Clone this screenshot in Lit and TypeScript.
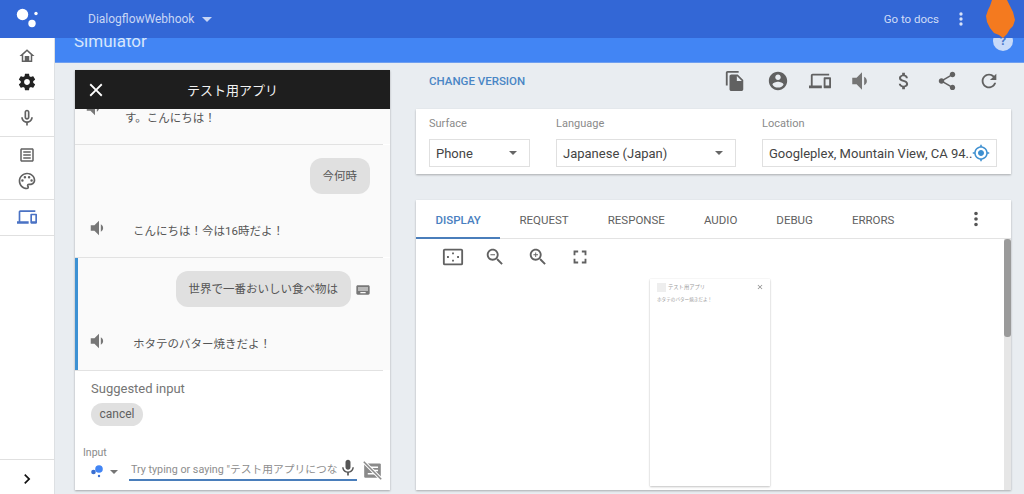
import { LitElement, html, css } from "lit";
import { customElement } from "lit/decorators.js";

const P = {
  home: "M12 3L2 12h3v8h14v-8h3L12 3zm5 15h-2v-6H9v6H7v-7.81l5-4.5 5 4.5V18z",
  gear: "M19.43 12.98c.04-.32.07-.64.07-.98s-.03-.66-.07-.98l2.11-1.65c.19-.15.24-.42.12-.64l-2-3.46c-.12-.22-.39-.3-.61-.22l-2.49 1c-.52-.4-1.08-.73-1.69-.98l-.38-2.65C14.46 2.18 14.25 2 14 2h-4c-.25 0-.46.18-.49.42l-.38 2.65c-.61.25-1.17.59-1.69.98l-2.49-1c-.23-.09-.49 0-.61.22l-2 3.46c-.13.22-.07.49.12.64l2.11 1.65c-.04.32-.07.65-.07.98s.03.66.07.98l-2.11 1.65c-.19.15-.24.42-.12.64l2 3.46c.12.22.39.3.61.22l2.49-1c.52.4 1.08.73 1.69.98l.38 2.65c.03.24.24.42.49.42h4c.25 0 .46-.18.49-.42l.38-2.65c.61-.25 1.17-.59 1.69-.98l2.49 1c.23.09.49 0 .61-.22l2-3.46c.12-.22.07-.49-.12-.64l-2.11-1.65zM12 15.5c-1.93 0-3.5-1.57-3.5-3.5s1.57-3.5 3.5-3.5 3.5 1.57 3.5 3.5-1.57 3.5-3.5 3.5z",
  micO: "M12 14c1.66 0 3-1.34 3-3V5c0-1.66-1.34-3-3-3S9 3.34 9 5v6c0 1.66 1.34 3 3 3zm-1-9c0-.55.45-1 1-1s1 .45 1 1v6c0 .55-.45 1-1 1s-1-.45-1-1V5zm6 6c0 2.76-2.24 5-5 5s-5-2.24-5-5H5c0 3.53 2.61 6.43 6 6.92V21h2v-3.08c3.39-.49 6-3.39 6-6.92h-2z",
  mic: "M12 14c1.66 0 2.99-1.34 2.99-3L15 5c0-1.66-1.34-3-3-3S9 3.34 9 5v6c0 1.66 1.34 3 3 3zm5.3-3c0 3-2.54 5.1-5.3 5.1S6.7 14 6.7 11H5c0 3.41 2.72 6.23 6 6.72V21h2v-3.28c3.28-.48 6-3.3 6-6.72h-1.7z",
  list: "M19 3H5c-1.1 0-2 .9-2 2v14c0 1.1.9 2 2 2h14c1.1 0 2-.9 2-2V5c0-1.1-.9-2-2-2zm0 16H5V5h14v14zM7 7h10v2H7zm0 4h10v2H7zm0 4h10v2H7z",
  palette: "M12 22C6.49 22 2 17.51 2 12S6.49 2 12 2s10 4.04 10 9c0 3.31-2.69 6-6 6h-1.77c-.28 0-.5.22-.5.5 0 .12.05.23.13.33.41.47.64 1.06.64 1.67A2.5 2.5 0 0 1 12 22zm0-18c-4.41 0-8 3.59-8 8s3.59 8 8 8c.28 0 .5-.22.5-.5a.54.54 0 0 0-.14-.35c-.41-.46-.63-1.05-.63-1.65a2.5 2.5 0 0 1 2.5-2.5H16c2.21 0 4-1.79 4-4 0-3.86-3.59-7-8-7z M6.5 10a1.5 1.5 0 1 0 0 3 1.5 1.5 0 0 0 0-3z M9.5 6a1.5 1.5 0 1 0 0 3 1.5 1.5 0 0 0 0-3z M14.5 6a1.5 1.5 0 1 0 0 3 1.5 1.5 0 0 0 0-3z M17.5 10a1.5 1.5 0 1 0 0 3 1.5 1.5 0 0 0 0-3z",
  devices: "M4 6h18V4H4c-1.1 0-2 .9-2 2v11H0v3h14v-3H4V6zm19 2h-6c-.55 0-1 .45-1 1v10c0 .55.45 1 1 1h6c.55 0 1-.45 1-1V9c0-.55-.45-1-1-1zm-1 9h-4v-7h4v7z",
  volume: "M3 9v6h4l5 5V4L7 9H3zm13.5 3c0-1.77-1.02-3.29-2.5-4.03v8.05c1.48-.73 2.5-2.25 2.5-4.02z",
  copy: "M16 1H4c-1.1 0-2 .9-2 2v14h2V3h12V1zm-1 4l6 6v10c0 1.1-.9 2-2 2H7.99C6.89 23 6 22.1 6 21l.01-14c0-1.1.89-2 1.99-2h7zm-1 7h5.5L14 6.5V12z",
  account: "M12 2C6.48 2 2 6.48 2 12s4.48 10 10 10 10-4.48 10-10S17.52 2 12 2zm0 3c1.66 0 3 1.34 3 3s-1.34 3-3 3-3-1.34-3-3 1.34-3 3-3zm0 14.2c-2.5 0-4.71-1.28-6-3.22.03-1.99 4-3.08 6-3.08 1.99 0 5.97 1.09 6 3.08-1.29 1.94-3.5 3.22-6 3.22z",
  dollar: "M11.8 10.9c-2.27-.59-3-1.2-3-2.15 0-1.09 1.01-1.85 2.7-1.85 1.78 0 2.44.85 2.5 2.1h2.21c-.07-1.72-1.12-3.3-3.21-3.81V3h-3v2.16c-1.94.42-3.5 1.68-3.5 3.61 0 2.31 1.91 3.46 4.7 4.13 2.5.6 3 1.48 3 2.41 0 .69-.49 1.79-2.7 1.79-2.06 0-2.87-.92-2.98-2.1h-2.2c.12 2.19 1.76 3.42 3.68 3.83V21h3v-2.15c1.95-.37 3.5-1.5 3.5-3.55 0-2.84-2.43-3.81-4.7-4.4z",
  share: "M18 16.08c-.76 0-1.44.3-1.96.77L8.91 12.7c.05-.23.09-.46.09-.7s-.04-.47-.09-.7l7.05-4.11c.54.5 1.25.81 2.04.81 1.66 0 3-1.34 3-3s-1.34-3-3-3-3 1.34-3 3c0 .24.04.47.09.7L8.04 9.81C7.5 9.31 6.79 9 6 9c-1.66 0-3 1.34-3 3s1.34 3 3 3c.79 0 1.5-.31 2.04-.81l7.12 4.16c-.05.21-.08.43-.08.65 0 1.61 1.31 2.92 2.92 2.92s2.92-1.31 2.92-2.92-1.31-2.92-2.92-2.92z",
  refresh: "M17.65 6.35C16.2 4.9 14.21 4 12 4c-4.42 0-7.99 3.58-7.99 8s3.57 8 7.99 8c3.73 0 6.84-2.55 7.73-6h-2.08c-.82 2.33-3.04 4-5.65 4-3.31 0-6-2.69-6-6s2.69-6 6-6c1.66 0 3.14.69 4.22 1.78L13 11h7V4l-2.35 2.35z",
  zoomIn: "M15.5 14h-.79l-.28-.27C15.41 12.59 16 11.11 16 9.5 16 5.91 13.09 3 9.5 3S3 5.91 3 9.5 5.91 16 9.5 16c1.61 0 3.09-.59 4.23-1.57l.27.28v.79l5 4.99L20.49 19l-4.99-5zm-6 0C7.01 14 5 11.99 5 9.5S7.01 5 9.5 5 14 7.01 14 9.5 11.99 14 9.5 14z M12 10h-2v2H9v-2H7V9h2V7h1v2h2v1z",
  zoomOut: "M15.5 14h-.79l-.28-.27C15.41 12.59 16 11.11 16 9.5 16 5.91 13.09 3 9.5 3S3 5.91 3 9.5 5.91 16 9.5 16c1.61 0 3.09-.59 4.23-1.57l.27.28v.79l5 4.99L20.49 19l-4.99-5zm-6 0C7.01 14 5 11.99 5 9.5S7.01 5 9.5 5 14 7.01 14 9.5 11.99 14 9.5 14z M7 9h5v1H7z",
  full: "M7 14H5v5h5v-2H7v-3zm-2-4h2V7h3V5H5v5zm12 7h-3v2h5v-5h-2v3zM14 5v2h3v3h2V5h-5z",
  fit: "M3 3h18a2 2 0 0 1 2 2v14a2 2 0 0 1-2 2H3a2 2 0 0 1-2-2V5a2 2 0 0 1 2-2zm0 2v14h18V5H3z M11 7h2v2h-2z M11 15h2v2h-2z M5.500 11h2v2h-2z M16.500 11h2v2h-2z",
  close: "M19 6.41L17.59 5 12 10.59 6.41 5 5 6.41 10.59 12 5 17.59 6.41 19 12 13.41 17.59 19 19 17.59 13.41 12z",
  keyboard: "M20 5H4c-1.1 0-1.99.9-1.99 2L2 17c0 1.1.9 2 2 2h16c1.1 0 2-.9 2-2V7c0-1.1-.9-2-2-2zm-9 3h2v2h-2V8zm0 3h2v2h-2v-2zM8 8h2v2H8V8zm0 3h2v2H8v-2zm-1 2H5v-2h2v2zm0-3H5V8h2v2zm9 7H8v-2h8v2zm0-4h-2v-2h2v2zm0-3h-2V8h2v2zm3 3h-2v-2h2v2zm0-3h-2V8h2v2z",
  chevron: "M10 6L8.59 7.41 13.17 12l-4.58 4.59L10 18l6-6z",
  more: "M12 8a2 2 0 1 0 0-4 2 2 0 0 0 0 4zm0 2a2 2 0 1 0 0 4 2 2 0 0 0 0-4zm0 6a2 2 0 1 0 0 4 2 2 0 0 0 0-4z",
  gps: "M12 8c-2.21 0-4 1.790-4 4s1.790 4 4 4 4-1.790 4-4-1.790-4-4-4zm8.940 3c-.460-4.170-3.770-7.480-7.940-7.940V1h-2v2.060C6.830 3.520 3.520 6.830 3.060 11H1v2h2.060c.460 4.170 3.770 7.480 7.940 7.940V23h2v-2.060c4.170-.460 7.480-3.770 7.940-7.940H23v-2h-2.060zM12 19c-3.870 0-7-3.130-7-7s3.130-7 7-7 7 3.130 7 7-3.130 7-7 7z",
};

const ic = (d: string, cls = "") =>
  html`<svg class="ic ${cls}" viewBox="0 0 24 24" aria-hidden="true"><path d=${d}></path></svg>`;

@customElement("app-root")
export class AppRoot extends LitElement {
  static styles = css`
    :host {
      display: block;
      width: 1024px;
      height: 494px;
      overflow: hidden;
      position: relative;
      font-family: Roboto, "Noto Sans CJK JP", sans-serif;
      color: #616161;
      background: #e9edf1;
    }
    * { box-sizing: border-box; }
    .ic { display: block; width: 22px; height: 22px; fill: currentColor; flex: none; }

    header {
      height: 38px;
      background: #3367d6;
      display: flex;
      align-items: center;
      color: #d0dcf6;
      padding-left: 14px;
      position: relative;
      z-index: 2;
    }
    .logo { width: 26px; height: 28px; flex: none; fill: #fff; }
    .project { margin-left: 48px; font-size: 12px; font-weight: 400; color: #c8d6f5; }
    .caret-w { width: 0; height: 0; border: 5px solid transparent; border-top: 5px solid #c8d6f5; border-bottom: 0; margin-left: 8px; }
    .spacer { flex: 1; }
    .docs { font-size: 11.500px; font-weight: 400; }
    .h-more { width: 20px; height: 20px; margin: 0 53px 0 12px; color: #d8e2f8; }
    .blob { position: absolute; left: 984px; top: 0; width: 31px; height: 38px; fill: #f47a1f; }

    .layout { display: flex; height: 456px; }
    aside {
      width: 55px;
      flex: none;
      background: #fff;
      border-right: 1px solid #dde0e3;
      display: flex;
      flex-direction: column;
      color: #616161;
    }
    .grp { border-bottom: 1px solid #e0e0e0; padding: 5px 0; }
    .grp.first { padding-bottom: 4px; }
    .grp.last { padding-top: 4px; }
    .cell { height: 26px; display: flex; align-items: center; justify-content: center; }
    .cell .ic { width: 18px; height: 18px; }
    .cell .big { width: 20px; height: 20px; }
    .dark { color: #222; }
    .blue { color: #4a72c4; }
    .bottom { margin-top: auto; height: 35px; border-top: 1px solid #e0e0e0; display: flex; align-items: center; justify-content: center; color: #111; }
    .bottom .ic { width: 20px; height: 20px; margin-top: 3px; }

    main { flex: 1; min-width: 0; display: flex; flex-direction: column; }
    .band {
      height: 25px;
      flex: none;
      background: #4285f4;
      border-bottom: 1px solid #6f9ff0;
      display: flex;
      justify-content: space-between;
      overflow: hidden;
      padding: 0 11px 0 19px;
    }
    .band h1 { margin: -7px 0 0; font-size: 17px; line-height: 20px; font-weight: 400; color: #d7e5fb; height: 20px; }
    .help {
      width: 20px; height: 20px; margin-top: -7px; border-radius: 50%;
      background: #c7daf9; color: #4a78c9; font-size: 13px; font-weight: 700;
      line-height: 20px; text-align: center;
    }
    .content { flex: 1; min-height: 0; display: flex; gap: 26px; padding: 0 13px 4px 20px; }

    .chat {
      width: 315px;
      flex: none;
      margin-top: 7px;
      background: #fff;
      box-shadow: 0 1px 2px rgba(0,0,0,.3);
      display: flex;
      flex-direction: column;
      overflow: hidden;
      color: #555;
    }
    .bar {
      height: 39px; flex: none; background: #1e1e1e; color: #f2f2f2;
      display: flex; align-items: center; position: relative; z-index: 1;
    }
    .bar .ic { width: 22px; height: 22px; margin-left: 10px; color: #fff; }
    .bar span { flex: 1; text-align: center; font-size: 13px; margin-right: 32px; }
    .row { background: #fafafa; overflow: hidden; font-size: 11.500px; }
    .r0 { height: 35px; padding-left: 9px; display: flex; }
    .r0 .ic { width: 22px; height: 22px; margin-top: -12px; color: #777; }
    .r0 p { margin: 0 0 0 19px; line-height: 18px; }
    .r1 { height: 112px; padding: 13px 20px 0 13px; }
    .r2 { height: 112px; padding: 13px 20px 0 10px; border-left: 3px solid #3d91d3; }
    .rule { height: 1px; background: #e2e2e2; margin-right: 7px; flex: none; }
    .me { display: flex; justify-content: flex-end; align-items: center; }
    .bubble { height: 36px; background: #e0e0e0; border-radius: 12px; padding: 0 13px; line-height: 36px; }
    .kb { width: 16px !important; height: 16px !important; margin: 2px -1px 0 4px; color: #777; }
    .bot { display: flex; align-items: center; margin-top: 26px; height: 20px; }
    .bot .ic { width: 22px; height: 22px; margin-top: -4px; color: #777; }
    .bot span { margin-left: 23px; }
    .sug { padding: 8px 0 0 16px; font-size: 13px; line-height: 20px; color: #757575; }
    .chip { margin-top: 4px; width: 52px; height: 23px; background: #e0e0e0; border-radius: 12px; font-size: 12px; line-height: 23px; text-align: center; color: #616161; }
    .in-label { margin: 20px 0 0 8px; font-size: 10.500px; line-height: 14px; color: #8a8a8a; }
    .in-row { display: flex; align-items: flex-start; height: 24px; padding-left: 16px; }
    .adot { width: 14px; height: 14px; margin-top: 4px; flex: none; }
    .caret-g { width: 0; height: 0; border: 4px solid transparent; border-top: 4px solid #757575; border-bottom: 0; margin: 10px 0 0 5px; flex: none; }
    .field {
      margin-left: 11px; width: 228px; height: 21px; border-bottom: 2px solid #4a7ebb;
      display: flex; align-items: center; padding-left: 2px;
    }
    .field span { flex: 1; min-width: 0; white-space: nowrap; font-size: 10.750px; line-height: 18px; padding-top: 1px; color: #8d8d8d; }
    .field .ic { width: 20px; height: 20px; color: #555; margin: -4px -1px 0 0; }
    .nos { width: 19px; height: 19px; flex: none; margin: 1px 0 0 6px; }

    .right { flex: 1; min-width: 0; display: flex; flex-direction: column; }
    .tools { height: 46px; flex: none; display: flex; align-items: center; padding: 0 11px 10px 13px; }
    .cv { font-size: 11.500px; font-weight: 500; color: #4a86c5; flex: 1; }
    .tools .ic { width: 22px; height: 22px; margin-left: 20.300px; color: #616161; }
    .tools .vol { width: 26px; height: 26px; margin: 0 -2px 0 18.300px; color: #757575; }
    .card { background: #fff; box-shadow: 0 1px 2px rgba(0,0,0,.28); }
    .opts { height: 65px; flex: none; display: flex; gap: 26px; padding: 8px 14px 0 13px; }
    .opt label { display: block; font-size: 11px; line-height: 14px; color: #8a8a8a; }
    .box {
      margin-top: 8px; height: 28px; border: 1px solid #e0e0e0;
      display: flex; align-items: center; justify-content: space-between;
      padding: 0 6px; font-size: 13px; color: #444; white-space: nowrap;
    }
    .s { width: 101px; } .l { width: 180px; } .o { width: 235px; }
    .caret-d { width: 0; height: 0; border: 4.500px solid transparent; border-top: 4.500px solid #666; border-bottom: 0; margin-right: 6px; }
    .gps { width: 18px !important; height: 18px !important; color: #3d8fd0; margin-right: 1px; }

    .sim { margin-top: 26px; flex: 1; min-height: 0; display: flex; flex-direction: column; overflow: hidden; }
    .tabs { height: 39px; flex: none; display: flex; align-items: center; border-bottom: 1px solid #e3e3e3; font-size: 11.500px; font-weight: 400; }
    .tab { height: 39px; line-height: 40px; padding: 0 19.500px; color: #616161; }
    .tab.on { color: #4a7fc0; border-bottom: 2px solid #4a7ebb; width: 84px; font-weight: 500; padding-right: 0; }
    .tabs .ic { width: 22px; height: 22px; margin: 0 24px 0 auto; color: #555; }
    .sb { flex: 1; min-height: 0; display: flex; }
    .view { flex: 1; min-width: 0; display: flex; flex-direction: column; overflow: hidden; }
    .vt { height: 36px; flex: none; display: flex; align-items: center; gap: 20.300px; padding-left: 26px; color: #616161; margin-bottom: 4px; }
    .vt .ic { width: 22px; height: 22px; }
    .track { width: 7px; flex: none; background: #e6e6e6; }
    .thumb { height: 98px; background: #9a9a9a; border-radius: 3px; }
    .phone {
      width: 120px; height: 207px; align-self: center; flex: none;
      background: #fff; box-shadow: 0 1px 2px rgba(0,0,0,.22), 0 0 1px rgba(0,0,0,.12);
      padding: 4px 7px 0;
      color: #9a9a9a;
    }
    .ph { display: flex; align-items: center; height: 8px; }
    .sq { width: 9px; height: 9px; background: #eee; flex: none; }
    .ph span { font-size: 5.300px; margin-left: 2px; flex: 1; white-space: nowrap; }
    .ph .ic { width: 8px; height: 8px; color: #888; margin-right: -1px; }
    .ph-msg { font-size: 4.600px; margin-top: 5px; line-height: 7px; white-space: nowrap; }
  `;

  render() {
    return html`
      <header>
        <svg class="logo" viewBox="0 0 26 28" aria-hidden="true">
          <circle cx="8.500" cy="9.500" r="5.700"></circle>
          <circle cx="18" cy="18.500" r="3.700"></circle>
          <circle cx="22" cy="8.500" r="1.700"></circle>
        </svg>
        <span class="project">DialogflowWebhook</span>
        <i class="caret-w"></i>
        <span class="spacer"></span>
        <span class="docs">Go to docs</span>
        ${ic(P.more, "h-more")}
        <svg class="blob" viewBox="0 0 31 38" aria-hidden="true">
          <path d="M8 0h15l3 6 3 6 2 8-2 6-3 3-3 5-4 4-4-3-5-2-4-5-3-6-1-6 2-6 2-4z"></path>
        </svg>
      </header>
      <div class="layout">
        <aside>
          <div class="grp first">
            <div class="cell">${ic(P.home)}</div>
            <div class="cell dark">${ic(P.gear, "big")}</div>
          </div>
          <div class="grp"><div class="cell">${ic(P.micO, "big")}</div></div>
          <div class="grp">
            <div class="cell">${ic(P.list)}</div>
            <div class="cell">${ic(P.palette, "big")}</div>
          </div>
          <div class="grp last"><div class="cell blue">${ic(P.devices, "big")}</div></div>
          <div class="bottom">${ic(P.chevron)}</div>
        </aside>
        <main>
          <div class="band">
            <h1>Simulator</h1>
            <div class="help">?</div>
          </div>
          <div class="content">
            <section class="chat">
              <div class="bar">${ic(P.close)}<span>テスト用アプリ</span></div>
              <div class="row r0">${ic(P.volume)}<p>す。こんにちは！</p></div>
              <div class="rule"></div>
              <div class="row r1">
                <div class="me"><div class="bubble">今何時</div></div>
                <div class="bot">${ic(P.volume)}<span>こんにちは！今は16時だよ！</span></div>
              </div>
              <div class="rule"></div>
              <div class="row r2">
                <div class="me"><div class="bubble">世界で一番おいしい食べ物は</div>${ic(P.keyboard, "kb")}</div>
                <div class="bot">${ic(P.volume)}<span>ホタテのバター焼きだよ！</span></div>
              </div>
              <div class="rule"></div>
              <div class="sug">
                Suggested input
                <div class="chip">cancel</div>
              </div>
              <div class="in-label">Input</div>
              <div class="in-row">
                <svg class="adot" viewBox="0 0 14 14" aria-hidden="true">
                  <circle cx="8" cy="5" r="3.800" fill="#4285f4"></circle>
                  <circle cx="2.500" cy="8" r="2.300" fill="#3b6fd0"></circle>
                  <circle cx="8" cy="12" r="1.200" fill="#3b6fd0"></circle>
                </svg>
                <i class="caret-g"></i>
                <div class="field">
                  <span>Try typing or saying "テスト用アプリにつな</span>
                  ${ic(P.mic)}
                </div>
                <svg class="nos" viewBox="0 0 24 24" aria-hidden="true">
                  <rect x="1.500" y="3" width="21" height="18" rx="1.500" fill="#8a8a8a"></rect>
                  <path d="M8 8h11M12 12h7M6 16h9" stroke="#fff" stroke-width="1.800" fill="none"></path>
                  <path d="M0.500 0.500l23 23" stroke="#fff" stroke-width="4.500"></path>
                  <path d="M1 1l22 22" stroke="#8a8a8a" stroke-width="2"></path>
                </svg>
              </div>
            </section>

            <section class="right">
              <div class="tools">
                <span class="cv">CHANGE VERSION</span>
                ${ic(P.copy)}${ic(P.account)}${ic(P.devices)}${ic(P.volume, "vol")}${ic(P.dollar)}${ic(P.share)}${ic(P.refresh)}
              </div>
              <div class="card opts">
                <div class="opt s"><label>Surface</label><div class="box">Phone<i class="caret-d"></i></div></div>
                <div class="opt l"><label>Language</label><div class="box">Japanese (Japan)<i class="caret-d"></i></div></div>
                <div class="opt o"><label>Location</label><div class="box">Googleplex, Mountain View, CA 94..${ic(P.gps, "gps")}</div></div>
              </div>
              <div class="card sim">
                <div class="tabs">
                  <div class="tab on">DISPLAY</div>
                  <div class="tab">REQUEST</div>
                  <div class="tab">RESPONSE</div>
                  <div class="tab">AUDIO</div>
                  <div class="tab">DEBUG</div>
                  <div class="tab">ERRORS</div>
                  ${ic(P.more)}
                </div>
                <div class="sb">
                  <div class="view">
                    <div class="vt">${ic(P.fit)}${ic(P.zoomOut)}${ic(P.zoomIn)}${ic(P.full)}</div>
                    <div class="phone">
                      <div class="ph"><i class="sq"></i><span>テスト用アプリ</span>${ic(P.close)}</div>
                      <div class="ph-msg">ホタテのバター焼きだよ！</div>
                    </div>
                  </div>
                  <div class="track"><div class="thumb"></div></div>
                </div>
              </div>
            </section>
          </div>
        </main>
      </div>
    `;
  }
}
